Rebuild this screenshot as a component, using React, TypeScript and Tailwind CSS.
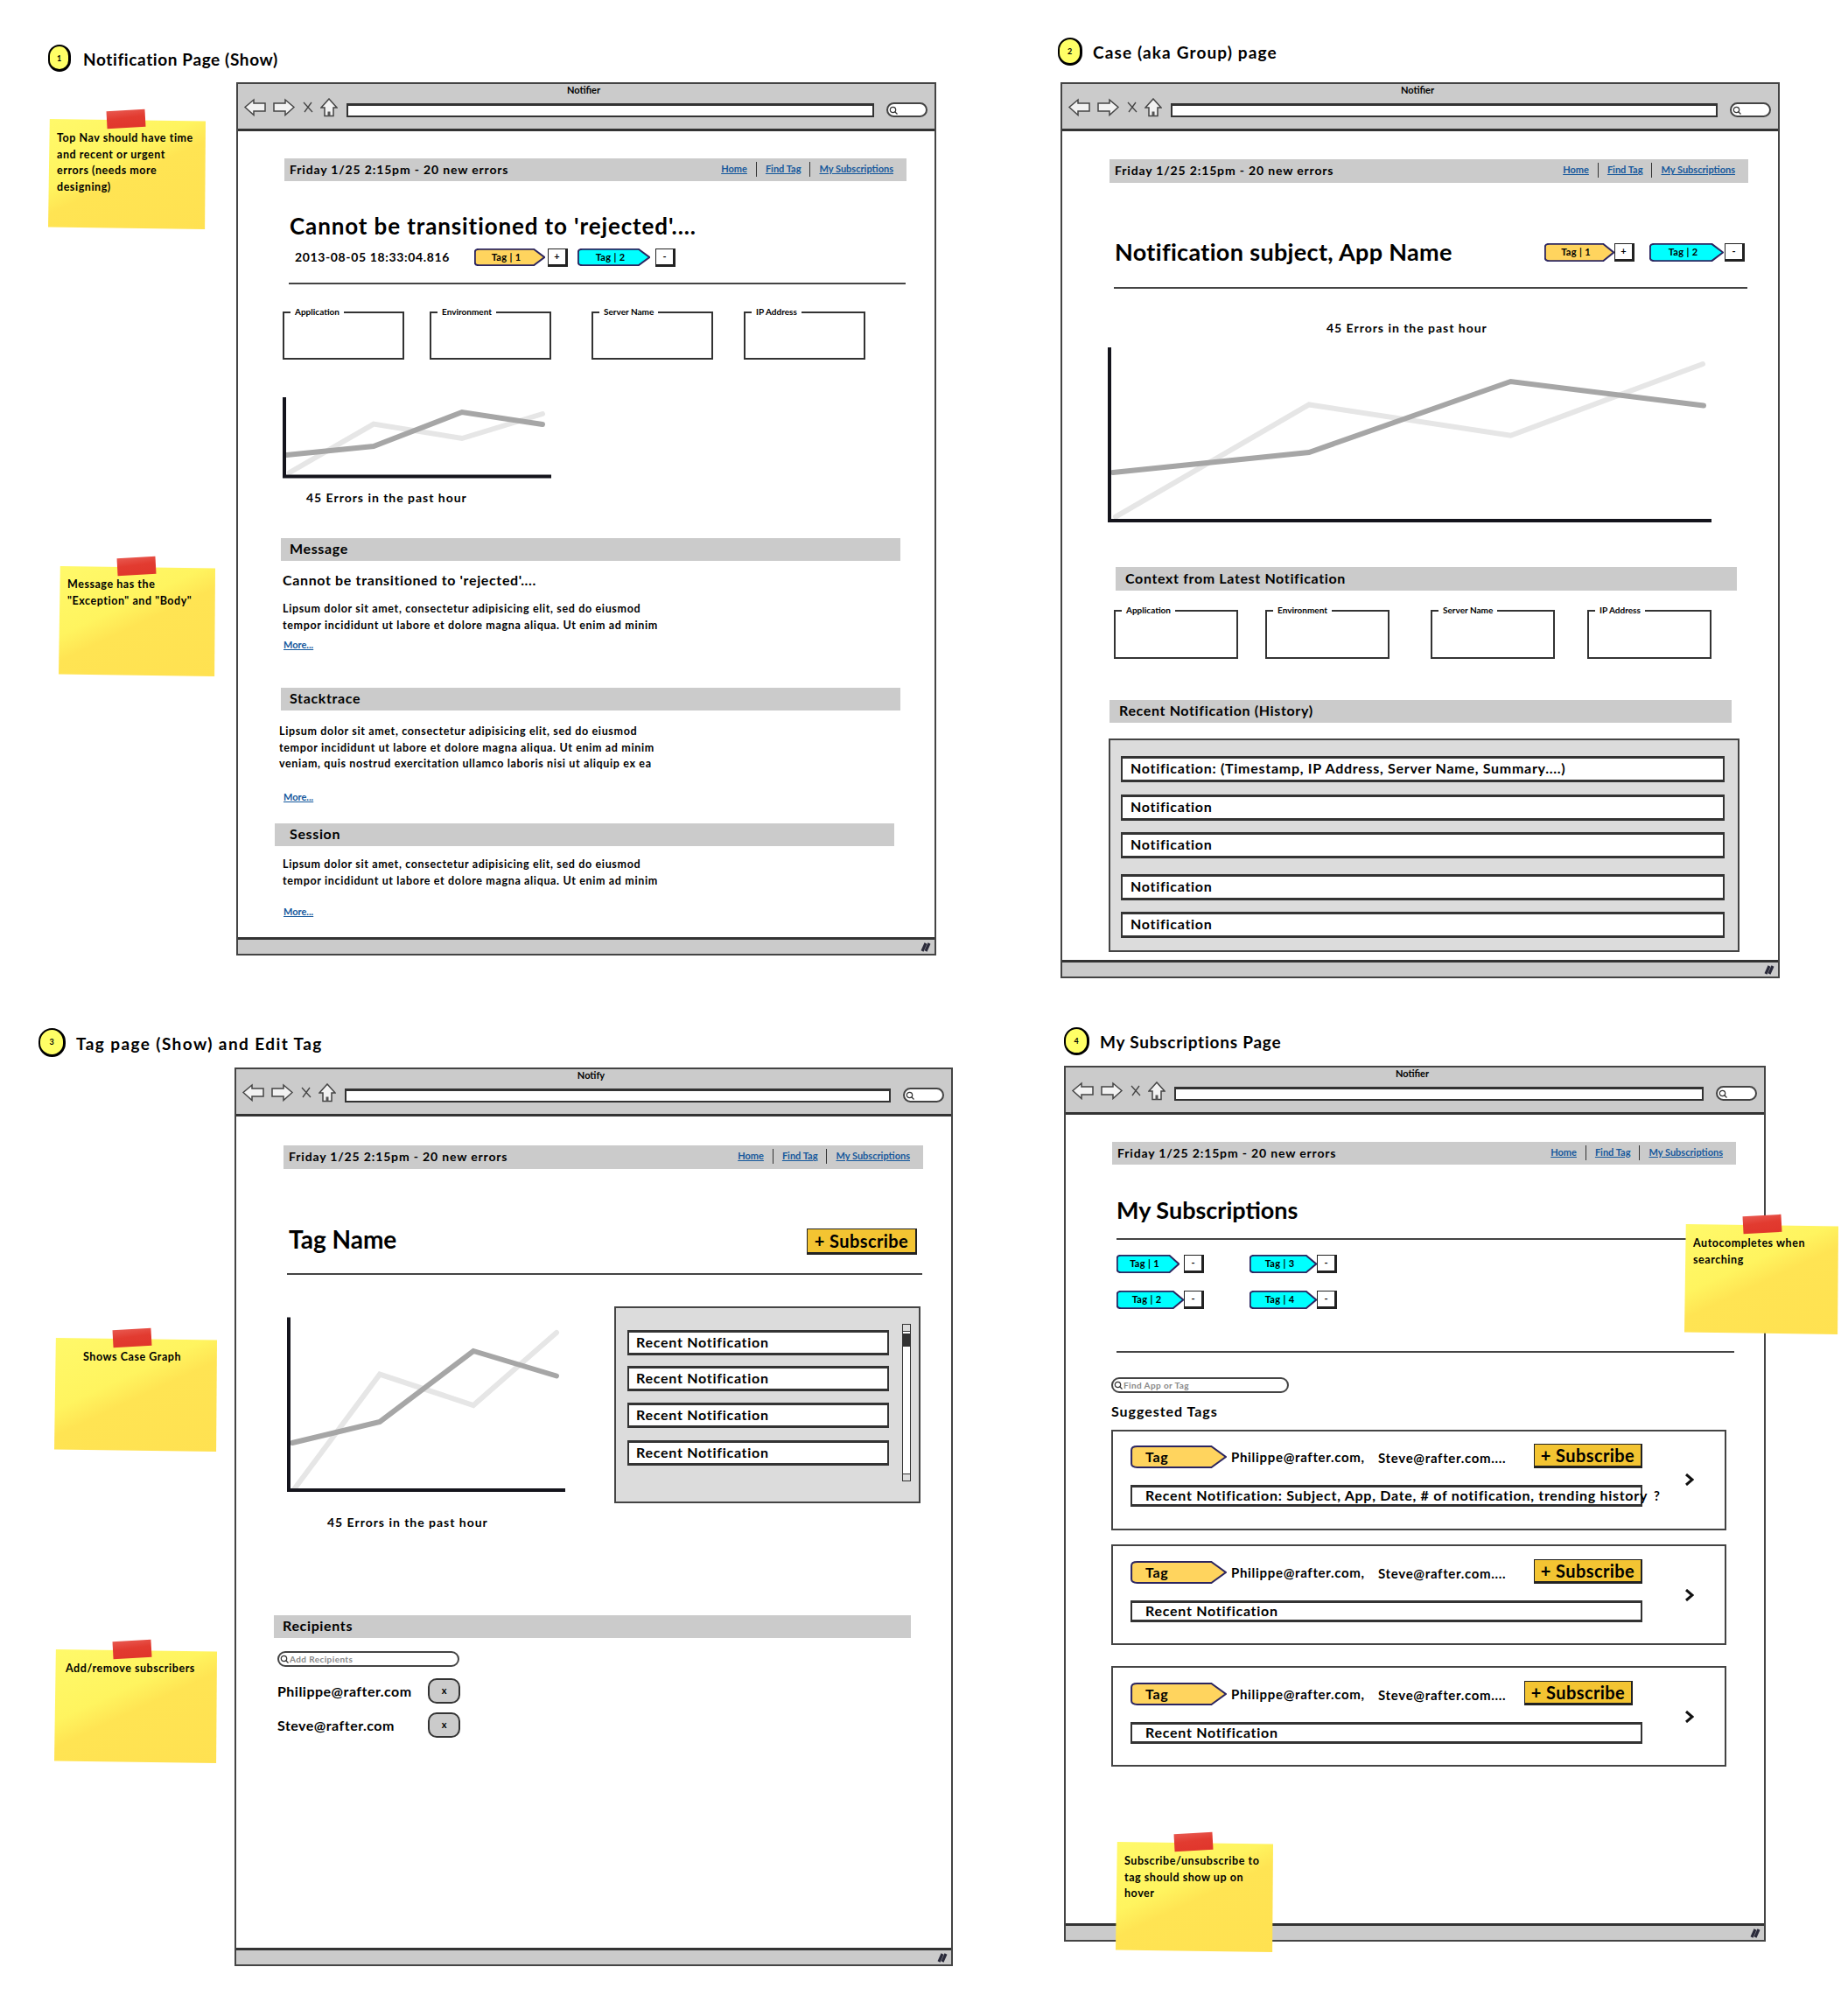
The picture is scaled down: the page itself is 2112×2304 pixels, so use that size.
import type { ReactNode } from 'react'
import clsx from 'clsx'

const LOREM_1 = 'Lipsum dolor sit amet, consectetur adipisicing elit, sed do eiusmod'
const LOREM_2 = 'tempor incididunt ut labore et dolore magna aliqua. Ut enim ad minim'
const LOREM_3 = 'veniam, quis nostrud exercitation ullamco laboris nisi ut aliquip ex ea'

function Window(props: { className: string; title: string; children: ReactNode }) {
    return (
        <div className={clsx('absolute flex flex-col border-2 border-[#444] bg-white', props.className)}>
            <div className="h-[54px] shrink-0 border-b-[3px] border-[#333] bg-[#cbcbcb]">
                <div className="h-[15px] pr-[6px] text-center text-[11px] leading-[13px] font-bold">{props.title}</div>
                <div className="flex items-center pr-[8px] pl-[7px]">
                    <svg viewBox="0 0 25 21" className="h-[21px] w-[25px]">
                        <path d="M1 10.5 L11 2 L11 6 L24 6 L24 15 L11 15 L11 19.5 Z" fill="#f2f2f2" stroke="#444" strokeWidth="1.5" />
                    </svg>
                    <svg viewBox="0 0 25 21" className="ml-[8px] h-[21px] w-[25px]">
                        <path d="M24 10.5 L14 2 L14 6 L1 6 L1 15 L14 15 L14 19.5 Z" fill="#f2f2f2" stroke="#444" strokeWidth="1.5" />
                    </svg>
                    <svg viewBox="0 0 12 13" className="ml-[9px] h-[13px] w-[12px]">
                        <path d="M1 1 L11 12 M10 1 L2 12" stroke="#444" strokeWidth="1.3" />
                    </svg>
                    <svg viewBox="0 0 20 22" className="ml-[8px] h-[22px] w-[20px]">
                        <path d="M10 1 L19 11 L15 11 L15 20.5 L5 20.5 L5 11 L1 11 Z" fill="#f2f2f2" stroke="#444" strokeWidth="1.5" />
                        <path d="M8.5 20.5 L8.5 15.5 L11.5 15.5 L11.5 20.5" fill="#555" />
                    </svg>
                    <div className="mt-[7px] ml-[10px] h-[16px] flex-1 border-2 border-t-[3px] border-[#333] bg-white" />
                    <SearchPill className="mt-[6px] ml-[14px] h-[17px] w-[47px]" />
                </div>
            </div>
            <div className="min-h-0 flex-1">{props.children}</div>
            <div className="flex h-[19px] shrink-0 items-center justify-end border-t-[3px] border-[#333] bg-[#cbcbcb] pr-[3px]">
                <svg viewBox="0 0 14 12" className="h-[12px] w-[14px]">
                    <path d="M3 11 L7 2 M7 11 L11 2" stroke="#2a2a3a" strokeWidth="3.2" />
                </svg>
            </div>
        </div>
    )
}

function SearchPill(props: { className: string; placeholder?: string }) {
    return (
        <div className={clsx('flex items-center rounded-full border-2 border-[#444] bg-white', props.className)}>
            <svg viewBox="0 0 10 10" className="ml-[1px] h-[10px] w-[10px] shrink-0">
                <circle cx="4.5" cy="4.5" r="3.2" fill="none" stroke="#333" strokeWidth="1.2" />
                <path d="M7 7 L9.5 9.5" stroke="#333" strokeWidth="1.3" />
            </svg>
            {props.placeholder && (
                <span className="ml-[1px] text-[10px] leading-none font-bold tracking-[0.04em] text-[#888]">{props.placeholder}</span>
            )}
        </div>
    )
}

function NavBar(props: { className: string }) {
    return (
        <div className={clsx('flex items-center justify-between bg-[#cbcbcb] pr-[15px] pb-[2px] pl-[6px]', props.className)}>
            <span className="text-[14px] font-bold tracking-[0.06em]">Friday 1/25 2:15pm - 20 new errors</span>
            <div className="flex items-center text-[11px] font-bold text-[#15589c] underline">
                <span>Home</span>
                <span className="mx-[10px] h-[17px] w-px bg-[#333]" />
                <span>Find Tag</span>
                <span className="mx-[10px] h-[17px] w-px bg-[#333]" />
                <span>My Subscriptions</span>
            </div>
        </div>
    )
}

function SectionBar(props: { className: string; children: ReactNode }) {
    return (
        <div className={clsx('flex items-center bg-[#cbcbcb] pb-[2px] text-[16px] font-bold tracking-[0.04em]', props.className)}>{props.children}</div>
    )
}

function Rule(props: { className: string }) {
    return <div className={clsx('h-[2px] bg-[#444]', props.className)} />
}

function More(props: { className: string }) {
    return <div className={clsx('text-[11px] leading-[14px] font-bold text-[#15589c] underline', props.className)}>More...</div>
}

function Lorem(props: { className: string; lines: string[] }) {
    return (
        <div className={clsx('text-[12.5px] leading-[18.6px] font-bold tracking-[0.052em]', props.className)}>
            {props.lines.map((line) => (
                <div key={line}>{line}</div>
            ))}
        </div>
    )
}

function Caption(props: { className: string }) {
    return <div className={clsx('text-[14px] leading-[18px] font-bold tracking-[0.07em]', props.className)}>45 Errors in the past hour</div>
}

function Tag(props: { className: string; fill: string; label: string; textClass?: string }) {
    return (
        <div className={clsx('relative flex items-center', props.className)}>
            <svg viewBox="0 0 100 100" preserveAspectRatio="none" className="absolute inset-0 h-full w-full">
                <path
                    d="M7 4 L84 4 L99 50 L84 96 L7 96 Q1 96 1 80 L1 20 Q1 4 7 4 Z"
                    fill={props.fill}
                    stroke="#2b2560"
                    strokeWidth="2"
                    vectorEffect="non-scaling-stroke"
                />
            </svg>
            <span className={clsx('relative font-bold whitespace-nowrap', props.textClass ?? 'w-full pr-[8px] text-center text-[11px] tracking-[0.03em]')}>
                {props.label}
            </span>
        </div>
    )
}

function TagBox(props: { className?: string; children: string }) {
    return (
        <div className={clsx('flex h-[21px] w-[23px] items-center justify-center border border-r-[3px] border-b-[3px] border-[#222] bg-white text-[11px] font-bold', props.className)}>
            {props.children}
        </div>
    )
}

function Field(props: { className: string; label: string }) {
    return (
        <div className={clsx('relative border-2 border-[#333]', props.className)}>
            <span className="absolute -top-[8px] left-[7px] bg-white px-[5px] text-[10px] leading-[12px] font-bold">{props.label}</span>
        </div>
    )
}

function Row(props: { className: string; children: ReactNode }) {
    return (
        <div className={clsx('flex items-center border-2 border-t-[3px] border-b-[3px] border-[#333] bg-white pb-[2px] text-[16px] font-bold tracking-[0.045em] whitespace-nowrap', props.className)}>
            {props.children}
        </div>
    )
}

function Chart(props: {
    className: string
    viewBox: string
    axis: string
    dark: string
    light: string
}) {
    return (
        <svg viewBox={props.viewBox} className={props.className}>
            <polyline points={props.light} fill="none" stroke="#e6e6e6" strokeWidth="6" strokeLinecap="round" />
            <polyline points={props.dark} fill="none" stroke="#a6a6a6" strokeWidth="6" strokeLinecap="round" />
            <polyline points={props.axis} fill="none" stroke="#14141c" strokeWidth="4" />
        </svg>
    )
}

function Subscribe(props: { className: string }) {
    return (
        <div className={clsx('flex items-center justify-center border border-r-2 border-b-[3px] border-[#222] bg-[#f3c432] text-[20px] font-bold tracking-[0.02em] whitespace-nowrap', props.className)}>
            + Subscribe
        </div>
    )
}

function Sticky(props: { className: string; children: ReactNode }) {
    return (
        <div className={clsx('absolute', props.className)}>
            <div className="absolute inset-0 bg-[linear-gradient(155deg,#fff96a_0%,#fff45f_38%,#ffe453_52%,#ffe151_100%)] [clip-path:polygon(1%_0,100%_2%,99.5%_100%,0_98%)]" />
            <div className="absolute -top-[10px] left-[67px] h-[20px] w-[44px] -rotate-3 bg-[linear-gradient(175deg,#e8584f_0%,#e23b30_45%,#e0352b_100%)]" />
            <div className="relative text-[12.5px] leading-[18.6px] font-bold tracking-[0.044em]">{props.children}</div>
        </div>
    )
}

function Heading(props: { className: string; circleClass: string; num: string; children: string }) {
    return (
        <div className={clsx('absolute flex items-center text-[19px] font-bold whitespace-nowrap', props.className)}>
            <div className={clsx('flex shrink-0 items-center justify-center rounded-full border-2 border-r-[3px] border-b-[3px] border-black bg-[#ffff66] text-[9px] tracking-normal', props.circleClass)}>
                {props.num}
            </div>
            <span className="mt-[3px]">{props.children}</span>
        </div>
    )
}

function NotificationPage() {
    return (
        <Window className="top-[94px] left-[270px] h-[998px] w-[800px]" title="Notifier">
            <NavBar className="mt-[31px] ml-[53px] h-[26px] w-[711px]" />
            <div className="mt-[35px] ml-[59px] text-[26px] leading-[32px] font-bold tracking-[0.034em]">Cannot be transitioned to 'rejected'....</div>
            <div className="mt-[10px] ml-[65px] flex h-[20px] items-center">
                <span className="mb-[2px] w-[205px] text-[14px] font-bold tracking-[0.045em]">2013-08-05 18:33:04.816</span>
                <Tag className="h-[20px] w-[81px]" fill="#ffd45e" label="Tag | 1" />
                <TagBox className="ml-[3px]">+</TagBox>
                <Tag className="ml-[11px] h-[20px] w-[83px]" fill="#00ffff" label="Tag | 2" />
                <TagBox className="ml-[6px]">-</TagBox>
            </div>
            <Rule className="mt-[19px] ml-[58px] w-[705px]" />
            <div className="mt-[31px] ml-[51px] flex">
                <Field className="h-[55px] w-[139px]" label="Application" />
                <Field className="ml-[29px] h-[55px] w-[139px]" label="Environment" />
                <Field className="ml-[46px] h-[55px] w-[139px]" label="Server Name" />
                <Field className="ml-[35px] h-[55px] w-[139px]" label="IP Address" />
            </div>
            <Chart
                className="mt-[41px] ml-[51px] block h-[96px] w-[310px]"
                viewBox="0 0 310 96"
                axis="2,2 2,92.5 307,92.5"
                dark="4.5,68 104,58 205,19 297,33"
                light="8,88 104,32.6 205,49 297,21"
            />
            <Caption className="mt-[12px] ml-[78px]" />
            <SectionBar className="mt-[37px] ml-[49px] h-[26px] w-[708px] pl-[10px]">Message</SectionBar>
            <div className="mt-[12px] ml-[51px] text-[16px] leading-[20px] font-bold tracking-[0.04em]">Cannot be transitioned to 'rejected'....</div>
            <Lorem className="mt-[14px] ml-[51px]" lines={[LOREM_1, LOREM_2]} />
            <More className="mt-[6px] ml-[52px]" />
            <SectionBar className="mt-[42px] ml-[49px] h-[26px] w-[708px] pl-[10px]">Stacktrace</SectionBar>
            <Lorem className="mt-[15px] ml-[47px]" lines={[LOREM_1, LOREM_2, LOREM_3]} />
            <More className="mt-[21px] ml-[52px]" />
            <SectionBar className="mt-[23px] ml-[42px] h-[26px] w-[708px] pl-[17px]">Session</SectionBar>
            <Lorem className="mt-[12px] ml-[51px]" lines={[LOREM_1, LOREM_2]} />
            <More className="mt-[19px] ml-[52px]" />
        </Window>
    )
}

function CasePage() {
    return (
        <Window className="top-[94px] left-[1212px] h-[1024px] w-[822px]" title="Notifier">
            <NavBar className="mt-[32px] ml-[54px] h-[27px] w-[730px]" />
            <div className="mt-[62px] ml-[60px] flex h-[34px] w-[720px] items-center">
                <span className="flex-1 text-[27px] font-bold tracking-[0.0125em]">Notification subject, App Name</span>
                <Tag className="h-[21px] w-[80px]" fill="#ffd45e" label="Tag | 1" />
                <TagBox>+</TagBox>
                <Tag className="ml-[17px] h-[21px] w-[85px]" fill="#00ffff" label="Tag | 2" />
                <TagBox className="ml-px">-</TagBox>
            </div>
            <Rule className="mt-[23px] ml-[59px] w-[724px]" />
            <Caption className="mt-[36px] ml-[302px]" />
            <Chart
                className="mt-[11px] ml-[52px] block h-[205px] w-[694px]"
                viewBox="0 0 694 205"
                axis="2,2 2,200 690,200"
                dark="6,145 230,122 460.5,41 681,68.6"
                light="9,195.6 230,67.5 460.5,102.7 680,21"
            />
            <SectionBar className="mt-[48px] ml-[61px] h-[27px] w-[710px] pl-[11px]">Context from Latest Notification</SectionBar>
            <div className="mt-[22px] ml-[59px] flex">
                <Field className="h-[56px] w-[142px]" label="Application" />
                <Field className="ml-[31px] h-[56px] w-[142px]" label="Environment" />
                <Field className="ml-[47px] h-[56px] w-[142px]" label="Server Name" />
                <Field className="ml-[37px] h-[56px] w-[142px]" label="IP Address" />
            </div>
            <SectionBar className="mt-[47px] ml-[54px] h-[26px] w-[711px] pl-[11px]">Recent Notification (History)</SectionBar>
            <div className="mt-[18px] ml-[53px] h-[244px] w-[721px] border-2 border-[#444] bg-[#dcdcdc] pt-[18px] pl-[12px]">
                <Row className="h-[30px] w-[690px] pl-[9px]">Notification: (Timestamp, IP Address, Server Name, Summary....)</Row>
                <Row className="mt-[14px] h-[30px] w-[690px] pl-[9px]">Notification</Row>
                <Row className="mt-[13px] h-[30px] w-[690px] pl-[9px]">Notification</Row>
                <Row className="mt-[18px] h-[30px] w-[690px] pl-[9px]">Notification</Row>
                <Row className="mt-[13px] h-[30px] w-[690px] pl-[9px]">Notification</Row>
            </div>
        </Window>
    )
}

function TagPage() {
    return (
        <Window className="top-[1220px] left-[268px] h-[1027px] w-[821px]" title="Notify">
            <NavBar className="mt-[33px] ml-[54px] h-[27px] w-[731px]" />
            <div className="mt-[63px] ml-[60px] flex w-[718px] items-start justify-between">
                <span className="text-[28px] leading-[34px] font-bold">Tag Name</span>
                <Subscribe className="mt-[5px] h-[30px] w-[126px]" />
            </div>
            <Rule className="mt-[21px] ml-[58px] w-[726px]" />
            <div className="mt-[36px] ml-[58px] flex">
                <div className="w-[374px]">
                    <Chart
                        className="mt-[10px] block h-[205px] w-[324px]"
                        viewBox="0 0 324 205"
                        axis="2,2.6 2,200 318,200"
                        dark="6,146 106,122 213,41 308,69.5"
                        light="8.5,198.5 106,67.6 213,103 308,20"
                    />
                    <Caption className="mt-[23px] ml-[46px]" />
                </div>
                <div className="flex h-[225px] w-[350px] items-start border-2 border-[#444] bg-[#dcdcdc] pt-[18px] pl-[13px]">
                    <div>
                        <Row className="mt-[7px] h-[29px] w-[299px] pl-[8px]">Recent Notification</Row>
                        <Row className="mt-[12px] h-[29px] w-[299px] pl-[8px]">Recent Notification</Row>
                        <Row className="mt-[13px] h-[29px] w-[299px] pl-[8px]">Recent Notification</Row>
                        <Row className="mt-[14px] h-[29px] w-[299px] pl-[8px]">Recent Notification</Row>
                    </div>
                    <div className="ml-[15px] flex h-[180px] w-[10px] flex-col border border-[#333] bg-white">
                        <div className="h-[8px] border-b border-[#333] bg-[#ddd]" />
                        <div className="mt-[2px] h-[15px] bg-[#333]" />
                        <div className="mt-auto h-[8px] border-t border-[#333] bg-[#ddd]" />
                    </div>
                </div>
            </div>
            <SectionBar className="mt-[97px] ml-[43px] h-[26px] w-[728px] pl-[10px]">Recipients</SectionBar>
            <SearchPill className="mt-[15px] ml-[47px] h-[18px] w-[208px]" placeholder="Add Recipients" />
            <div className="mt-[13px] ml-[47px] flex items-center text-[16px] font-bold">
                <span className="w-[172px] tracking-[0.03em]">Philippe@rafter.com</span>
                <div className="flex h-[29px] w-[37px] items-center justify-center rounded-[10px] border-2 border-[#333] bg-[#cbcbcb] text-[11px]">x</div>
            </div>
            <div className="mt-[10px] ml-[47px] flex items-center text-[16px] font-bold">
                <span className="w-[172px] tracking-[0.03em]">Steve@rafter.com</span>
                <div className="flex h-[29px] w-[37px] items-center justify-center rounded-[10px] border-2 border-[#333] bg-[#cbcbcb] text-[11px]">x</div>
            </div>
        </Window>
    )
}

function SuggestedCard(props: { className: string; note: string; hint?: boolean; subscribeClass: string }) {
    return (
        <div className={clsx('ml-[52px] flex h-[115px] w-[703px] items-start border-2 border-[#444] pl-[20px]', props.className)}>
            <div className="w-[585px]">
                <div className="flex h-[28px] items-center text-[15px] font-bold tracking-[0.046em] whitespace-nowrap">
                    <Tag className="mt-[2px] h-[26px] w-[110px]" fill="#ffd45e" label="Tag" textClass="pl-[17px] text-[16px]" />
                    <span className="mt-[3px] ml-[5px] w-[168px]">Philippe@rafter.com,</span>
                    <span className="mt-[5px]">Steve@rafter.com....</span>
                    <Subscribe className={clsx('h-[28px] w-[124px] tracking-[0.02em]', props.subscribeClass)} />
                </div>
                <div className="relative mt-[19px]">
                    <Row className="h-[25px] w-[585px] pl-[15px]">{props.note}</Row>
                    {props.hint && <span className="absolute top-[1px] -right-[20px] text-[15px] font-bold">?</span>}
                </div>
            </div>
            <svg viewBox="0 0 11 14" className="-mt-[15px] ml-[48px] h-[14px] w-[11px] self-center">
                <path d="M2 1 L9 7 L2 13" fill="none" stroke="#111" strokeWidth="3" />
            </svg>
        </div>
    )
}

function SubscriptionsPage() {
    return (
        <Window className="top-[1218px] left-[1216px] h-[1001px] w-[802px]" title="Notifier">
            <NavBar className="mt-[31px] ml-[53px] h-[26px] w-[713px]" />
            <div className="mt-[35px] ml-[58px] text-[27px] leading-[34px] font-bold">My Subscriptions</div>
            <Rule className="mt-[15px] ml-[58px] w-[706px]" />
            <div className="mt-[17px] ml-[58px] grid grid-cols-[152px_auto] gap-y-[20px]">
                <div className="flex">
                    <Tag className="h-[21px] w-[72px]" fill="#00ffff" label="Tag | 1" />
                    <TagBox className="ml-[5px]">-</TagBox>
                </div>
                <div className="flex">
                    <Tag className="h-[21px] w-[77px]" fill="#00ffff" label="Tag | 3" />
                    <TagBox>-</TagBox>
                </div>
                <div className="flex">
                    <Tag className="h-[21px] w-[77px]" fill="#00ffff" label="Tag | 2" />
                    <TagBox>-</TagBox>
                </div>
                <div className="flex">
                    <Tag className="h-[21px] w-[77px]" fill="#00ffff" label="Tag | 4" />
                    <TagBox>-</TagBox>
                </div>
            </div>
            <Rule className="mt-[48px] ml-[58px] w-[706px]" />
            <SearchPill className="mt-[28px] ml-[52px] h-[18px] w-[203px]" placeholder="Find App or Tag" />
            <div className="mt-[12px] ml-[52px] text-[16px] leading-[18px] font-bold tracking-[0.06em]">Suggested Tags</div>
            <SuggestedCard
                className="mt-[12px] pt-[14px]"
                note="Recent Notification: Subject, App, Date, # of notification, trending history"
                hint
                subscribeClass="ml-auto"
            />
            <SuggestedCard className="mt-[16px] pt-[15px]" note="Recent Notification" subscribeClass="ml-auto" />
            <SuggestedCard className="mt-[24px] pt-[15px]" note="Recent Notification" subscribeClass="mr-[11px] ml-auto" />
        </Window>
    )
}

export default function App() {
    return (
        <div className="relative h-[2304px] w-[2112px] overflow-hidden bg-white font-['Lato','Noto_Sans',sans-serif] text-black">
            <Heading className="top-[51px] left-[55px] gap-[14px] tracking-[0.032em]" circleClass="h-[31px] w-[26px]" num="1">Notification Page (Show)</Heading>
            <Heading className="top-[43px] left-[1209px] gap-[12px] tracking-[0.06em]" circleClass="h-[32px] w-[28px]" num="2">Case (aka Group) page</Heading>
            <Heading className="top-[1175px] left-[44px] gap-[12px] tracking-[0.074em]" circleClass="h-[33px] w-[31px]" num="3">Tag page (Show) and Edit Tag</Heading>
            <Heading className="top-[1174px] left-[1216px] gap-[12px] tracking-[0.04em]" circleClass="h-[32px] w-[29px]" num="4">My Subscriptions Page</Heading>

            <NotificationPage />
            <CasePage />
            <TagPage />
            <SubscriptionsPage />

            <Sticky className="top-[136px] left-[55px] h-[126px] w-[180px] pt-[13px] pl-[10px]">
                Top Nav should have time
                <br />
                and recent or urgent
                <br />
                errors (needs more
                <br />
                designing)
            </Sticky>
            <Sticky className="top-[647px] left-[67px] h-[126px] w-[179px] pt-[12px] pl-[10px]">
                Message has the
                <br />
                "Exception" and "Body"
            </Sticky>
            <Sticky className="top-[1529px] left-[62px] h-[130px] w-[186px] pt-[13px] pl-[33px]">Shows Case Graph</Sticky>
            <Sticky className="top-[1885px] left-[62px] h-[130px] w-[186px] pt-[13px] pl-[13px]">Add/remove subscribers</Sticky>
            <Sticky className="top-[1399px] left-[1925px] h-[126px] w-[176px] pt-[13px] pl-[10px]">
                Autocompletes when
                <br />
                searching
            </Sticky>
            <Sticky className="top-[2105px] left-[1275px] h-[126px] w-[180px] pt-[13px] pl-[10px]">
                Subscribe/unsubscribe to
                <br />
                tag should show up on
                <br />
                hover
            </Sticky>
        </div>
    )
}
